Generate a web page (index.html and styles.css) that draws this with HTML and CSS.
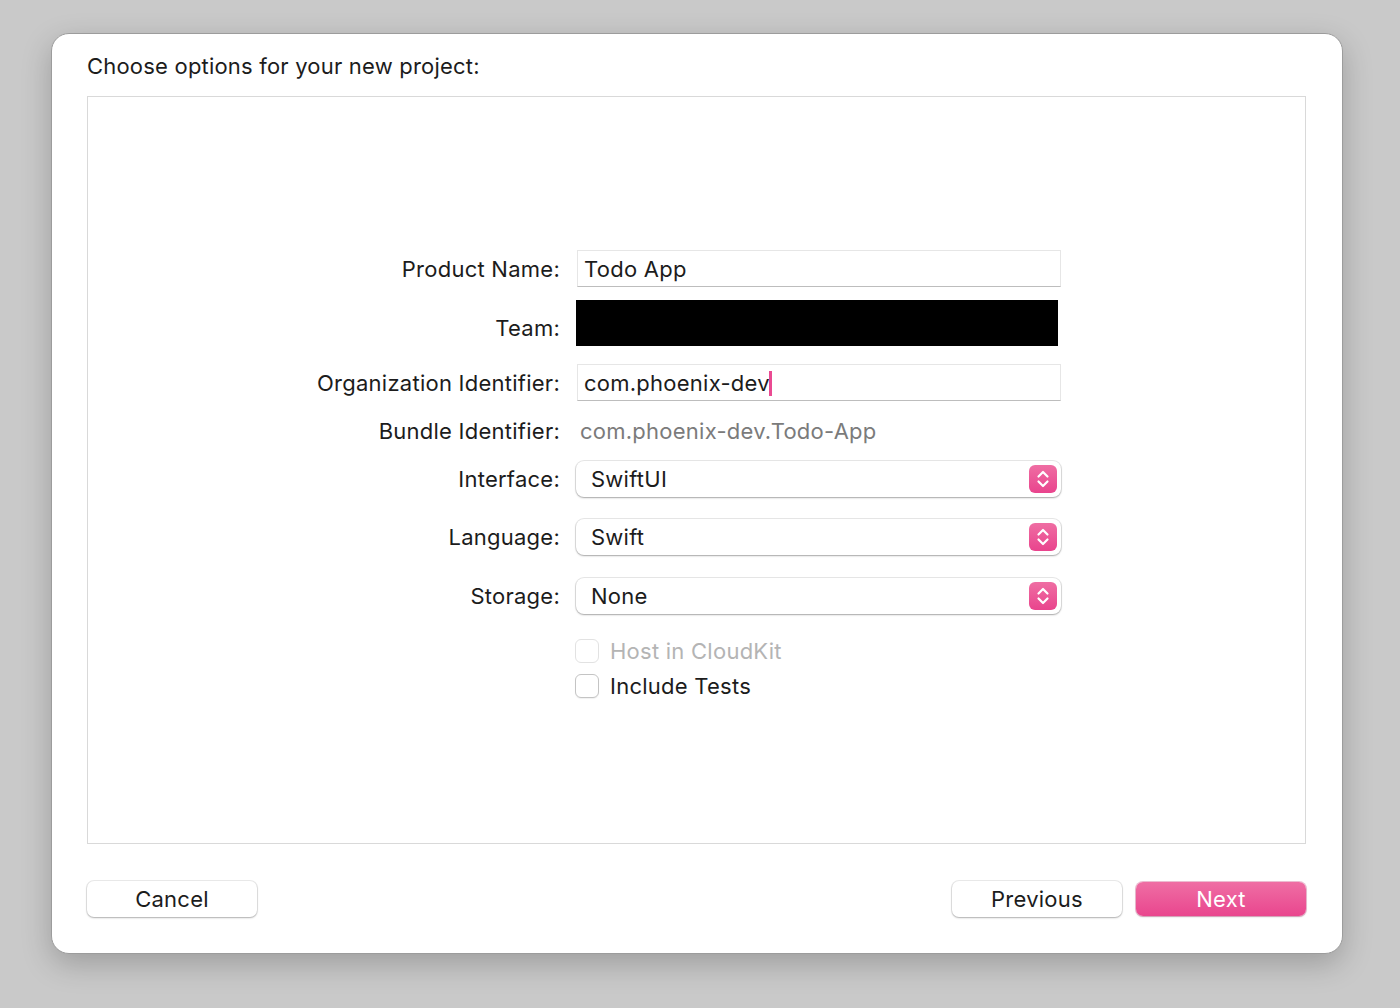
FILE: index.html
```html
<!DOCTYPE html>
<html>
<head>
<meta charset="utf-8">
<link rel="stylesheet" href="styles.css">
</head>
<body>
<div class="window">
  <div class="title">Choose options for your new project:</div>
  <div class="panel">
    <div class="form">
      <div class="row r1">
        <div class="label">Product Name:</div>
        <div class="field">Todo App</div>
      </div>
      <div class="row r2">
        <div class="label">Team:</div>
        <div class="redact"></div>
      </div>
      <div class="row r3">
        <div class="label">Organization Identifier:</div>
        <div class="field">com.phoenix-dev<span class="caret"></span></div>
      </div>
      <div class="row r4">
        <div class="label">Bundle Identifier:</div>
        <div class="static">com.phoenix-dev.Todo-App</div>
      </div>
      <div class="row r5">
        <div class="label">Interface:</div>
        <div class="popup"><span>SwiftUI</span><span class="stepper"><svg width="28" height="28" viewBox="0 0 28 28"><path d="M9.5 11.5 L14 7 L18.5 11.5" fill="none" stroke="#fff" stroke-width="2.2" stroke-linecap="round" stroke-linejoin="round"/><path d="M9.5 16.5 L14 21 L18.5 16.5" fill="none" stroke="#fff" stroke-width="2.2" stroke-linecap="round" stroke-linejoin="round"/></svg></span></div>
      </div>
      <div class="row r6">
        <div class="label">Language:</div>
        <div class="popup"><span>Swift</span><span class="stepper"><svg width="28" height="28" viewBox="0 0 28 28"><path d="M9.5 11.5 L14 7 L18.5 11.5" fill="none" stroke="#fff" stroke-width="2.2" stroke-linecap="round" stroke-linejoin="round"/><path d="M9.5 16.5 L14 21 L18.5 16.5" fill="none" stroke="#fff" stroke-width="2.2" stroke-linecap="round" stroke-linejoin="round"/></svg></span></div>
      </div>
      <div class="row r7">
        <div class="label">Storage:</div>
        <div class="popup"><span>None</span><span class="stepper"><svg width="28" height="28" viewBox="0 0 28 28"><path d="M9.5 11.5 L14 7 L18.5 11.5" fill="none" stroke="#fff" stroke-width="2.2" stroke-linecap="round" stroke-linejoin="round"/><path d="M9.5 16.5 L14 21 L18.5 16.5" fill="none" stroke="#fff" stroke-width="2.2" stroke-linecap="round" stroke-linejoin="round"/></svg></span></div>
      </div>
      <div class="row r8">
        <div class="label"></div>
        <div class="check disabled"><span class="box"></span><span>Host in CloudKit</span></div>
      </div>
      <div class="row r9">
        <div class="label"></div>
        <div class="check"><span class="box"></span><span>Include Tests</span></div>
      </div>
    </div>
  </div>
  <div class="footer">
    <div class="btn">Cancel</div>
    <div class="right">
      <div class="btn">Previous</div>
      <div class="btn primary">Next</div>
    </div>
  </div>
</div>
</body>
</html>
```
FILE: styles.css
```css
html, body {
  margin: 0;
  padding: 0;
}
body {
  background: #c9c9c9;
  font-family: Inter, "Liberation Sans", sans-serif;
  color: #1c1c1c;
  padding: 33px 0 0 51px;
  height: 1008px;
  box-sizing: border-box;
  letter-spacing: 0.25px;
}
.window {
  width: 1292px;
  height: 921px;
  box-sizing: border-box;
  background: #fff;
  border-radius: 18px;
  border: 1px solid #9c9c9c;
  box-shadow: 0 10px 30px rgba(0,0,0,0.22);
  padding: 18px 35px 0 35px;
}
.title {
  font-size: 22px;
  line-height: 28px;
  height: 28px;
  letter-spacing: 0.2px;
}
.panel {
  margin-top: 16px;
  width: 1219px;
  height: 748px;
  box-sizing: border-box;
  border: 1px solid #d9d9d9;
  padding-top: 153px;
}
.form {
  display: flex;
  flex-direction: column;
}
.row {
  display: flex;
  align-items: center;
  gap: 16px;
}
.label {
  width: 472px;
  text-align: right;
  font-size: 22px;
  flex: none;
}
.r1 { height: 37px; }
.r2 { height: 46px; margin-top: 13px; }
.r3 { height: 37px; margin-top: 18px; }
.r4 { height: 38px; margin-top: 11px; }
.r5 { height: 36px; margin-top: 11px; }
.r6 { height: 36px; margin-top: 22px; }
.r7 { height: 37px; margin-top: 22px; }
.r8 { height: 24px; margin-top: 25px; }
.r9 { height: 24px; margin-top: 11px; }
.r2 .label { padding-top: 10px; }
.field {
  width: 484px;
  height: 37px;
  margin-left: 1px;
  box-sizing: border-box;
  border: 1px solid #e6e6e6;
  border-bottom: 1px solid #bdbdbd;
  padding: 1px 0 0 6px;
  font-size: 22px;
  display: flex;
  align-items: center;
}
.caret {
  display: inline-block;
  width: 3px;
  height: 25px;
  background: #ea4a92;
  margin-left: -1px;
}
.redact {
  width: 482px;
  height: 46px;
  background: #000;
}
.static {
  font-size: 22px;
  color: #7b7b7b;
  padding-left: 4px;
}
.popup {
  width: 485px;
  height: 36px;
  box-sizing: border-box;
  border-radius: 8px;
  background: #fff;
  box-shadow: 0 0 0 1px rgba(0,0,0,0.09), 0 1px 2px rgba(0,0,0,0.28);
  display: flex;
  align-items: center;
  justify-content: space-between;
  padding: 0 4px 0 15px;
  font-size: 22px;
}
.stepper {
  width: 28px;
  height: 28px;
  border-radius: 6px;
  background: linear-gradient(#ef6ea3, #e9448d);
  display: flex;
}
.check {
  display: flex;
  align-items: center;
  gap: 11px;
  font-size: 22px;
  margin-left: -1px;
}
.box {
  width: 24px;
  height: 24px;
  box-sizing: border-box;
  border: 1px solid #c4c4c4;
  border-radius: 6px;
  background: #fff;
  box-shadow: 0 1px 1px rgba(0,0,0,0.06);
}
.check.disabled { color: #b4b4b4; }
.check.disabled .box { border-color: #e2e2e2; box-shadow: none; }
.footer {
  margin-top: 37px;
  width: 1219px;
  display: flex;
  justify-content: space-between;
}
.right {
  display: flex;
  gap: 14px;
}
.btn {
  width: 170px;
  height: 36px;
  box-sizing: border-box;
  border-radius: 7px;
  background: #fff;
  box-shadow: 0 0 0 1px rgba(0,0,0,0.08), 0 1px 2px rgba(0,0,0,0.25);
  font-size: 22px;
  display: flex;
  align-items: center;
  justify-content: center;
}
.btn.primary {
  background: linear-gradient(#ef6ea4, #e9468e);
  color: #fff;
  box-shadow: 0 0 0 1px rgba(200,40,110,0.3), 0 1px 2px rgba(0,0,0,0.2);
  height: 34px;
  margin-top: 1px;
}
```
